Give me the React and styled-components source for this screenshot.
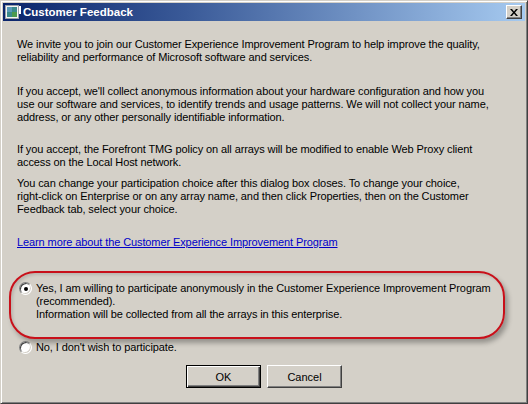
import React from "react";
import styled, { createGlobalStyle } from "styled-components";

const GlobalStyle = createGlobalStyle`
  html, body { margin: 0; padding: 0; width: 528px; height: 404px; overflow: hidden; background: #d4d0c8; }
  * { box-sizing: border-box; }
`;

const Window = styled.div`
  position: relative;
  width: 528px;
  height: 404px;
  background: #d4d0c8;
  border: 1px solid;
  border-color: #d4d0c8 #404040 #404040 #d4d0c8;
  box-shadow: inset 1px 1px #ffffff, inset -1px -1px #808080;
  padding: 2px;
  display: flex;
  flex-direction: column;
  font-family: "Liberation Sans", Arial, sans-serif;
  font-size: 11px;
  letter-spacing: -0.1px;
  color: #000;
`;

const TitleBar = styled.div`
  height: 18px;
  display: flex;
  align-items: center;
  padding: 0 2px 0 2px;
  background: linear-gradient(to right, #0a246a 0%, #3a5a98 35%, #a6caf0 100%);
`;

const TitleText = styled.span`
  margin-left: 2px;
  color: #fff;
  font-weight: bold;
  font-size: 11.5px;
  letter-spacing: 0;
  flex: 1;
`;

const CloseButton = styled.div`
  width: 16px;
  height: 14px;
  background: #d4d0c8;
  border: 1px solid;
  border-color: #ffffff #404040 #404040 #ffffff;
  box-shadow: inset -1px -1px #808080;
  display: flex;
  align-items: center;
  justify-content: center;
  margin-right: 1px;
`;

const Content = styled.div`
  padding: 17px 0 0 14px;
  display: flex;
  flex-direction: column;
`;

const Para = styled.p`
  margin: 0;
  margin-top: ${(p) => p.$gap || 0}px;
  line-height: 13px;
  white-space: nowrap;
`;

const Link = styled.a`
  display: block;
  margin-top: ${(p) => p.$gap || 0}px;
  line-height: 13px;
  color: #0000c8;
  text-decoration: underline;
  white-space: nowrap;
`;

const RadioRow = styled.label`
  display: flex;
  align-items: flex-start;
  gap: 4px;
  padding-left: 2px;
  margin-top: ${(p) => p.$gap || 0}px;
  line-height: 13px;
  white-space: nowrap;
`;

const RadioCircle = styled.span`
  flex: none;
  width: 13px;
  height: 13px;
  border-radius: 50%;
  background: #fff;
  border: 1px solid;
  border-color: #808080 #ffffff #ffffff #808080;
  box-shadow: inset 1px 1px #404040, inset -1px -1px #d4d0c8;
  display: flex;
  align-items: center;
  justify-content: center;
  &::after {
    content: "";
    width: 4px;
    height: 4px;
    border-radius: 50%;
    background: ${(p) => (p.$checked ? "#000" : "transparent")};
  }
`;

const ButtonRow = styled.div`
  display: flex;
  justify-content: center;
  gap: 6px;
  margin-top: 11px;
  margin-left: -14px;
`;

const Button = styled.button`
  width: 75px;
  height: 23px;
  font-family: inherit;
  font-size: 11px;
  color: #000;
  background: #d4d0c8;
  padding: 0;
  border: 1px solid;
  border-color: ${(p) => (p.$default ? "#000" : "#ffffff #404040 #404040 #ffffff")};
  box-shadow: ${(p) =>
    p.$default
      ? "inset 1px 1px #ffffff, inset -1px -1px #404040, inset -2px -2px #808080"
      : "inset -1px -1px #808080"};
`;

const Highlight = styled.div`
  position: absolute;
  left: 8px;
  top: 270px;
  width: 496px;
  height: 68px;
  border: 2px solid #c8101a;
  border-radius: 26px;
  box-shadow: 3px 4px 5px rgba(0, 0, 0, 0.3), inset 2px 2px 3px rgba(0, 0, 0, 0.12);
  pointer-events: none;
`;

function AppIcon() {
  return (
    <svg width="16" height="16" viewBox="0 0 16 16">
      <rect x="0.5" y="1.5" width="13" height="13" fill="#f4f4f4" stroke="#9aa0a8" />
      <rect x="2" y="3" width="10" height="10" fill="#3a8a8a" />
      <rect x="2" y="3" width="5" height="5" fill="#5a9ab8" />
      <rect x="7" y="8" width="5" height="5" fill="#4c9a4c" />
      <rect x="14" y="2" width="2" height="8" fill="#ffffff" />
    </svg>
  );
}

function CloseGlyph() {
  return (
    <svg width="8" height="7" viewBox="0 0 8 7">
      <path d="M0 0h2l2 2.5L6 0h2L5 3.5 8 7H6L4 4.5 2 7H0l3-3.5z" fill="#000" />
    </svg>
  );
}

export default function App() {
  return (
    <>
      <GlobalStyle />
      <Window>
        <TitleBar>
          <AppIcon />
          <TitleText>Customer Feedback</TitleText>
          <CloseButton>
            <CloseGlyph />
          </CloseButton>
        </TitleBar>
        <Content>
          <Para>
            We invite you to join our Customer Experience Improvement Program to help improve the quality,
            <br />
            reliability and performance of Microsoft software and services.
          </Para>
          <Para $gap={21}>
            If you accept, we'll collect anonymous information about your hardware configuration and how you
            <br />
            use our software and services, to identify trends and usage patterns. We will not collect your name,
            <br />
            address, or any other personally identifiable information.
          </Para>
          <Para $gap={19}>
            If you accept, the Forefront TMG policy on all arrays will be modified to enable Web Proxy client
            <br />
            access on the Local Host network.
          </Para>
          <Para $gap={8}>
            You can change your participation choice after this dialog box closes. To change your choice,
            <br />
            right-click on Enterprise or on any array name, and then click Properties, then on the Customer
            <br />
            Feedback tab, select your choice.
          </Para>
          <Link href="#" $gap={20}>
            Learn more about the Customer Experience Improvement Program
          </Link>
          <RadioRow $gap={33}>
            <RadioCircle $checked />
            <span>
              Yes, I am willing to participate anonymously in the Customer Experience Improvement Program
              <br />
              (recommended).
              <br />
              Information will be collected from all the arrays in this enterprise.
            </span>
          </RadioRow>
          <RadioRow $gap={20}>
            <RadioCircle />
            <span>No, I don't wish to participate.</span>
          </RadioRow>
          <ButtonRow>
            <Button $default>OK</Button>
            <Button>Cancel</Button>
          </ButtonRow>
        </Content>
        <Highlight />
      </Window>
    </>
  );
}
